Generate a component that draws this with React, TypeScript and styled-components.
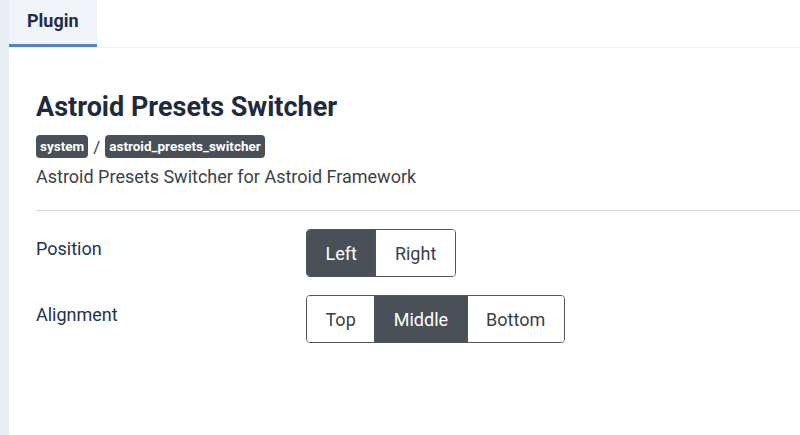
import React, { useState } from "react";
import styled, { createGlobalStyle } from "styled-components";

const Global = createGlobalStyle`
  html, body { margin: 0; padding: 0; background: #fff; }
  body { font-family: Roboto, "Noto Sans", sans-serif; color: #22262a; }
  * { box-sizing: border-box; }
`;

const Shell = styled.div`
  display: flex;
  min-height: 435px;
`;

const SideStrip = styled.div`
  width: 9px;
  flex-shrink: 0;
  background: #e9eef5;
`;

const Main = styled.div`
  flex: 1;
  display: flex;
  flex-direction: column;
`;

const TabBar = styled.div`
  display: flex;
  border-bottom: 1px solid #eef1f5;
  height: 48px;
`;

const Tab = styled.div<{ $active?: boolean }>`
  height: 47px;
  padding: 0 18px 3px;
  display: flex;
  align-items: center;
  font-size: 18px;
  font-weight: 700;
  color: #1d2e4c;
  background: ${(p) => (p.$active ? "#f1f5f9" : "transparent")};
  border-bottom: 3px solid ${(p) => (p.$active ? "#5584c4" : "transparent")};
`;

const Content = styled.div`
  padding: 41px 0 0 27px;
`;

const Title = styled.h1`
  margin: 0;
  font-size: 27px;
  font-weight: 700;
  color: #1f2b3d;
  line-height: 36px;
`;

const Crumbs = styled.div`
  display: flex;
  align-items: center;
  gap: 5px;
  margin-top: 10px;
  font-size: 17px;
  color: #3a3f45;
`;

const Badge = styled.span`
  background: #495057;
  color: #fff;
  font-size: 13.5px;
  font-weight: 700;
  border-radius: 4px;
  padding: 0 4px;
  height: 23px;
  line-height: 23px;
`;

const Desc = styled.p`
  margin: 5px 0 0;
  font-size: 18px;
  color: #3c4248;
  line-height: 27px;
`;

const Divider = styled.hr`
  border: 0;
  border-top: 1px solid #d6d8da;
  margin: 20px 0 0;
`;

const Form = styled.div`
  display: flex;
  flex-direction: column;
  gap: 18px;
  margin-top: 18px;
`;

const Row = styled.div`
  display: grid;
  grid-template-columns: 270px auto;
  align-items: start;
`;

const Label = styled.div`
  font-size: 18px;
  color: #22334b;
  padding-top: 9px;
`;

const Group = styled.div`
  display: inline-flex;
  border: 1px solid #50565c;
  border-radius: 4px;
  overflow: hidden;
  justify-self: start;
`;

const Choice = styled.button<{ $active?: boolean }>`
  font-family: Roboto, "Noto Sans", sans-serif;
  font-size: 18px;
  height: 46px;
  padding: 0 18.5px;
  border: 0;
  border-left: 1px solid #50565c;
  &:first-child { border-left: 0; }
  background: ${(p) => (p.$active ? "#495057" : "#fff")};
  color: ${(p) => (p.$active ? "#fff" : "#3a4047")};
  cursor: pointer;
`;

function Toggle({ options, initial }: { options: string[]; initial: string }) {
  const [val, setVal] = useState(initial);
  return (
    <Group>
      {options.map((o) => (
        <Choice key={o} $active={o === val} onClick={() => setVal(o)}>
          {o}
        </Choice>
      ))}
    </Group>
  );
}

export default function App() {
  return (
    <>
      <Global />
      <Shell>
        <SideStrip />
        <Main>
          <TabBar>
            <Tab $active>Plugin</Tab>
          </TabBar>
          <Content>
            <Title>Astroid Presets Switcher</Title>
            <Crumbs>
              <Badge>system</Badge>/<Badge>astroid_presets_switcher</Badge>
            </Crumbs>
            <Desc>Astroid Presets Switcher for Astroid Framework</Desc>
            <Divider />
            <Form>
              <Row>
                <Label>Position</Label>
                <Toggle options={["Left", "Right"]} initial="Left" />
              </Row>
              <Row>
                <Label>Alignment</Label>
                <Toggle options={["Top", "Middle", "Bottom"]} initial="Middle" />
              </Row>
            </Form>
          </Content>
        </Main>
      </Shell>
    </>
  );
}
